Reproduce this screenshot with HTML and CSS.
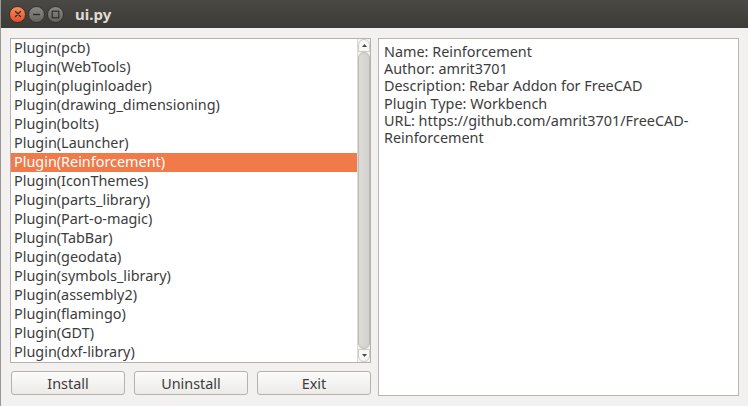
FILE: index.html
```html
<!DOCTYPE html>
<html>
<head>
<meta charset="utf-8">
<link rel="stylesheet" href="styles.css">
</head>
<body>
<div class="window">
  <div class="titlebar">
    <div class="controls">
      <span class="wbtn close"><svg width="8" height="8" viewBox="0 0 8 8"><path d="M1.5 1.5 L6.5 6.5 M6.5 1.5 L1.5 6.5" stroke="#3b2a22" stroke-width="1.4" stroke-linecap="round"/></svg></span>
      <span class="wbtn"><svg width="9" height="9" viewBox="0 0 9 9"><path d="M1 4.5 H8" stroke="#2e2d2a" stroke-width="1.4"/></svg></span>
      <span class="wbtn"><svg width="9" height="9" viewBox="0 0 9 9"><rect x="1.2" y="1.2" width="6.6" height="6.6" fill="none" stroke="#2e2d2a" stroke-width="1.2"/></svg></span>
    </div>
    <div class="title">ui.py</div>
  </div>
  <div class="content">
    <div class="leftcol">
      <div class="listbox">
        <ul class="items">
          <li>Plugin(pcb)</li>
          <li>Plugin(WebTools)</li>
          <li>Plugin(pluginloader)</li>
          <li>Plugin(drawing_dimensioning)</li>
          <li>Plugin(bolts)</li>
          <li>Plugin(Launcher)</li>
          <li class="selected">Plugin(Reinforcement)</li>
          <li>Plugin(IconThemes)</li>
          <li>Plugin(parts_library)</li>
          <li>Plugin(Part-o-magic)</li>
          <li>Plugin(TabBar)</li>
          <li>Plugin(geodata)</li>
          <li>Plugin(symbols_library)</li>
          <li>Plugin(assembly2)</li>
          <li>Plugin(flamingo)</li>
          <li>Plugin(GDT)</li>
          <li>Plugin(dxf-library)</li>
        </ul>
        <div class="scrollbar">
          <div class="arrow"><svg width="5" height="3" viewBox="0 0 5 3"><path d="M0 3 L2.5 0 L5 3 Z" fill="#4a4a4a"/></svg></div>
          <div class="thumb"></div>
          <div class="arrow"><svg width="5" height="3" viewBox="0 0 5 3"><path d="M0 0 L2.5 3 L5 0 Z" fill="#4a4a4a"/></svg></div>
        </div>
      </div>
      <div class="buttons">
        <button class="btn">Install</button>
        <button class="btn">Uninstall</button>
        <button class="btn">Exit</button>
      </div>
    </div>
    <div class="details">
      <div>Name: Reinforcement</div>
      <div>Author: amrit3701</div>
      <div>Description: Rebar Addon for FreeCAD</div>
      <div>Plugin Type: Workbench</div>
      <div>URL: https://github.com/amrit3701/FreeCAD-<br>Reinforcement</div>
    </div>
  </div>
</div>
</body>
</html>
```
FILE: styles.css
```css
html, body {
  margin: 0;
  padding: 0;
  width: 748px;
  height: 406px;
  overflow: hidden;
  background: #f2f1f0;
}
.window {
  width: 748px;
  height: 406px;
  display: flex;
  flex-direction: column;
  font-family: "Noto Sans", "Open Sans", sans-serif;
  font-size: 14.4px;
  color: #3c3c3c;
  border-left: 1px solid #9a9893;
  box-sizing: border-box;
}
.titlebar {
  height: 28px;
  flex: none;
  background: linear-gradient(#4a4944, #3c3b37);
  display: flex;
  align-items: center;
  padding-left: 8px;
}
.controls {
  display: flex;
  gap: 2px;
}
.wbtn {
  width: 17px;
  height: 17px;
  border-radius: 50%;
  background: linear-gradient(#8a8882, #66645f);
  border: 1px solid #33322e;
  display: flex;
  align-items: center;
  justify-content: center;
  box-sizing: border-box;
}
.wbtn.close {
  background: linear-gradient(#f78c5c, #e0532a);
  border-color: #4a2a1c;
}
.title {
  margin-left: 11px;
  font-family: "Noto Sans", sans-serif;
  font-weight: bold;
  font-size: 15px;
  color: #dfdbd2;
}
.content {
  flex: 1;
  display: grid;
  grid-template-columns: 361px 361px;
  column-gap: 7px;
  padding: 10px 8px 10px 9px;
}
.leftcol {
  display: flex;
  flex-direction: column;
  gap: 8px;
}
.listbox {
  height: 325px;
  box-sizing: border-box;
  border: 1px solid #b6b2ab;
  background: #fff;
  display: flex;
}
.items {
  list-style: none;
  margin: 0;
  padding: 0;
  flex: 1;
  overflow: hidden;
}
.items li {
  height: 19px;
  line-height: 18px;
  padding-left: 3px;
  white-space: nowrap;
}
.items li.selected {
  background: #f07a4a;
  color: #fff;
}
.scrollbar {
  width: 12px;
  flex: none;
  display: flex;
  flex-direction: column;
  background: #f4f3f1;
  border-left: 1px solid #dedbd6;
}
.arrow {
  height: 13px;
  flex: none;
  display: flex;
  align-items: center;
  justify-content: center;
  background: #f7f7f6;
  border: 1px solid #cfccc6;
  border-radius: 6px 6px 0 0;
  box-sizing: border-box;
}
.arrow:last-child {
  border-radius: 0 0 6px 6px;
}
.thumb {
  flex: 1;
  background: linear-gradient(90deg, #dddbd7, #d3d1cd);
  border: 1px solid #bdbab4;
  border-radius: 6px;
  margin: 0;
}
.buttons {
  display: grid;
  grid-template-columns: repeat(3, 114px);
  column-gap: 9px;
  padding: 0 1px;
}
.btn {
  height: 24px;
  margin: 0;
  border: 1px solid #b6b2ab;
  border-radius: 3px;
  background: linear-gradient(#fbfbfa, #ecebe8);
  font-family: "Noto Sans", "Open Sans", sans-serif;
  font-size: 14.4px;
  color: #3c3c3c;
  padding: 0;
}
.details {
  height: 358px;
  box-sizing: border-box;
  border: 1px solid #bab6b0;
  background: #fff;
  padding: 4px 5px;
  line-height: 17.2px;
}
```
